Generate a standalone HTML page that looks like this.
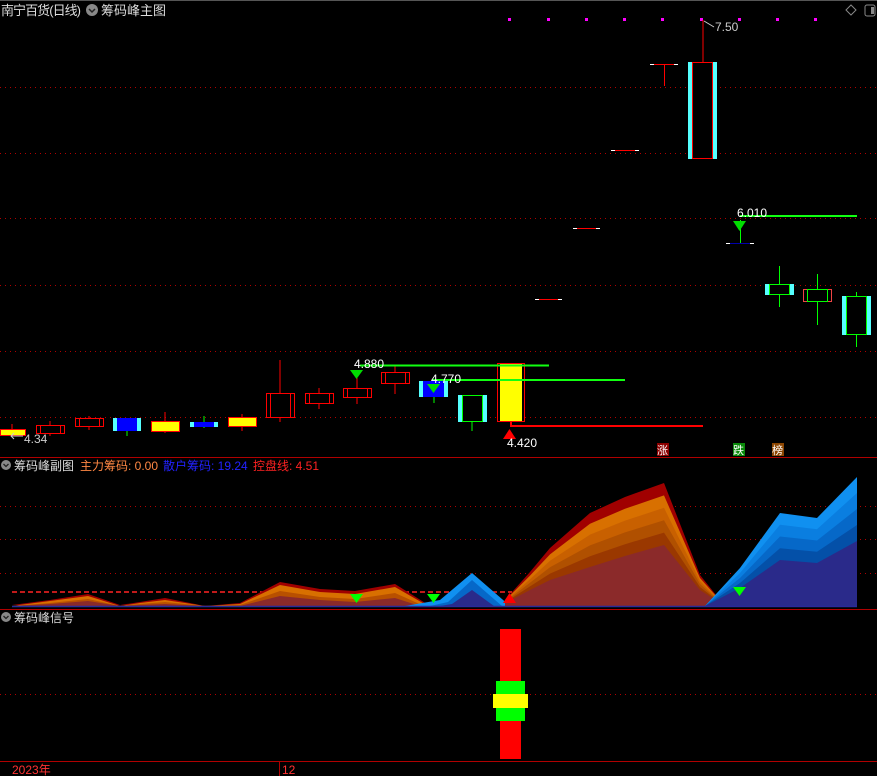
<!DOCTYPE html>
<html><head><meta charset="utf-8"><style>
html,body{margin:0;padding:0;background:#000;width:877px;height:776px;overflow:hidden}
svg{display:block}
text{font-family:"Liberation Sans","Noto Sans CJK SC",sans-serif}
</style></head><body>
<svg width="877" height="776" viewBox="0 0 877 776" xmlns="http://www.w3.org/2000/svg">
<rect width="877" height="776" fill="#000"/>
<line x1="0" y1="0.5" x2="877" y2="0.5" stroke="#555" />
<g stroke="#b00000" stroke-dasharray="1,4">
<line x1="0" y1="87.5" x2="877" y2="87.5"/>
<line x1="0" y1="153.5" x2="877" y2="153.5"/>
<line x1="0" y1="218.5" x2="877" y2="218.5"/>
<line x1="0" y1="285.5" x2="877" y2="285.5"/>
<line x1="0" y1="351.5" x2="877" y2="351.5"/>
<line x1="0" y1="417.5" x2="877" y2="417.5"/>
<line x1="0" y1="506.5" x2="877" y2="506.5"/>
<line x1="0" y1="539.5" x2="877" y2="539.5"/>
<line x1="0" y1="573.5" x2="877" y2="573.5"/>
<line x1="0" y1="694.5" x2="877" y2="694.5"/>
</g>
<line x1="0" y1="457.5" x2="877" y2="457.5" stroke="#b00000"/>
<line x1="0" y1="609.5" x2="877" y2="609.5" stroke="#b00000"/>
<line x1="0" y1="761.5" x2="877" y2="761.5" stroke="#b00000"/>
<line x1="279.5" y1="761" x2="279.5" y2="776" stroke="#b00000"/>

<text x="1" y="15" fill="#ddd" font-size="13" textLength="80">南宁百货(日线)</text>
<circle cx="92" cy="10" r="6" fill="#888"/><path d="M89 9l3 3 3-3" stroke="#222" stroke-width="1.5" fill="none"/>
<text x="101" y="15" fill="#ddd" font-size="13">筹码峰主图</text>
<g fill="#f0f"><rect x="508" y="18" width="3" height="3"/><rect x="547" y="18" width="3" height="3"/><rect x="585" y="18" width="3" height="3"/><rect x="623" y="18" width="3" height="3"/><rect x="661" y="18" width="3" height="3"/><rect x="700" y="18" width="3" height="3"/><rect x="738" y="18" width="3" height="3"/><rect x="776" y="18" width="3" height="3"/><rect x="814" y="18" width="3" height="3"/></g>
<path d="M851 5l5 5-5 5-5-5z" stroke="#888" fill="none"/>
<rect x="865" y="5" width="10" height="11" rx="2" stroke="#888" fill="none"/><rect x="871" y="7" width="3" height="7" fill="#888"/>

<g stroke-width="1">
<line x1="12" y1="424" x2="12" y2="437" stroke="#f00"/><rect x="0.5" y="429.5" width="25" height="6" fill="#ff0" stroke="#f00"/>
<line x1="50" y1="421" x2="50" y2="436" stroke="#f00"/><rect x="36.5" y="425.5" width="28" height="8" fill="#000" stroke="#f00"/><line x1="40.5" y1="426" x2="40.5" y2="433" stroke="#f00"/><line x1="60.5" y1="426" x2="60.5" y2="433" stroke="#f00"/>
<line x1="89" y1="416" x2="89" y2="430" stroke="#f00"/><rect x="75.5" y="418.5" width="28" height="8" fill="#000" stroke="#f00"/><line x1="79.5" y1="419" x2="79.5" y2="426" stroke="#f00"/><line x1="99.5" y1="419" x2="99.5" y2="426" stroke="#f00"/>
<line x1="127" y1="430" x2="127" y2="436" stroke="#0f0"/><rect x="113" y="418" width="28" height="13" fill="#5ff"/><rect x="117" y="418" width="20" height="13" fill="#00f"/>
<line x1="165" y1="412" x2="165" y2="433" stroke="#f00"/><rect x="151.5" y="421.5" width="28" height="10" fill="#ff0" stroke="#f00"/>
<line x1="204" y1="416" x2="204" y2="428" stroke="#0f0"/><rect x="190" y="422" width="28" height="5" fill="#5ff"/><rect x="194" y="422" width="20" height="5" fill="#00f"/>
<line x1="242" y1="414" x2="242" y2="431" stroke="#f00"/><rect x="228.5" y="417.5" width="28" height="9" fill="#ff0" stroke="#f00"/>
<line x1="280" y1="360" x2="280" y2="422" stroke="#f00"/><rect x="266.5" y="393.5" width="28" height="24" fill="#000" stroke="#f00"/><line x1="270.5" y1="394" x2="270.5" y2="417" stroke="#f00"/><line x1="290.5" y1="394" x2="290.5" y2="417" stroke="#f00"/>
<line x1="319" y1="388" x2="319" y2="409" stroke="#f00"/><rect x="305.5" y="393.5" width="28" height="10" fill="#000" stroke="#f00"/><line x1="309.5" y1="394" x2="309.5" y2="403" stroke="#f00"/><line x1="329.5" y1="394" x2="329.5" y2="403" stroke="#f00"/>
<line x1="357" y1="378" x2="357" y2="404" stroke="#f00"/><rect x="343.5" y="388.5" width="28" height="9" fill="#000" stroke="#f00"/><line x1="347.5" y1="389" x2="347.5" y2="397" stroke="#f00"/><line x1="367.5" y1="389" x2="367.5" y2="397" stroke="#f00"/>
<line x1="395" y1="366" x2="395" y2="394" stroke="#f00"/><rect x="381.5" y="372.5" width="28" height="11" fill="#000" stroke="#f00"/><line x1="385.5" y1="373" x2="385.5" y2="383" stroke="#f00"/><line x1="405.5" y1="373" x2="405.5" y2="383" stroke="#f00"/>
<line x1="434" y1="396" x2="434" y2="403" stroke="#0f0"/><rect x="419" y="381" width="29" height="16" fill="#5ff"/><rect x="423" y="381" width="21" height="16" fill="#00f"/>
<line x1="472" y1="420" x2="472" y2="431" stroke="#0f0"/><rect x="458" y="395" width="29" height="27" fill="#5ff"/><rect x="462.5" y="395.5" width="20" height="26" fill="#000" stroke="#0f0"/>
<rect x="497.5" y="363.5" width="27" height="58" fill="#000" stroke="#f00"/><rect x="500" y="364" width="22" height="57" fill="#ff0"/>
<line x1="535" y1="299.5" x2="562" y2="299.5" stroke="#fff"/><line x1="539" y1="299.5" x2="558" y2="299.5" stroke="#f00"/>
<line x1="573" y1="228.5" x2="600" y2="228.5" stroke="#fff"/><line x1="577" y1="228.5" x2="596" y2="228.5" stroke="#f00"/>
<line x1="611" y1="150.5" x2="639" y2="150.5" stroke="#fff"/><line x1="615" y1="150.5" x2="635" y2="150.5" stroke="#f00"/>
<line x1="650" y1="64.5" x2="678" y2="64.5" stroke="#fff"/><line x1="654" y1="64.5" x2="674" y2="64.5" stroke="#f00"/><line x1="664.5" y1="64" x2="664.5" y2="86" stroke="#f00"/>
<line x1="703" y1="20" x2="703" y2="62" stroke="#f00"/><rect x="688" y="62" width="29" height="97" fill="#5ff"/><rect x="692.5" y="62.5" width="20" height="96" fill="#000" stroke="#f00"/>
<line x1="726" y1="243.5" x2="754" y2="243.5" stroke="#fff"/><line x1="730" y1="243.5" x2="750" y2="243.5" stroke="#00a"/><line x1="740.5" y1="220" x2="740.5" y2="243" stroke="#0f0"/>
<line x1="779.5" y1="266" x2="779.5" y2="307" stroke="#0f0"/><rect x="765" y="284" width="29" height="11" fill="#5ff"/><rect x="769.5" y="284.5" width="20" height="10" fill="#000" stroke="#0f0"/>
<line x1="817.5" y1="274" x2="817.5" y2="325" stroke="#0f0"/><rect x="803.5" y="289.5" width="28" height="12" fill="#000" stroke="#e44"/><rect x="807.5" y="289.5" width="20" height="12" fill="none" stroke="#0f0"/>
<line x1="856.5" y1="292" x2="856.5" y2="347" stroke="#0f0"/><rect x="842" y="296" width="29" height="39" fill="#5ff"/><rect x="846.5" y="296.5" width="20" height="38" fill="#000" stroke="#0f0"/>
</g>
<line x1="360" y1="365.5" x2="549" y2="365.5" stroke="#1f1" stroke-width="2"/>
<line x1="432" y1="380" x2="625" y2="380" stroke="#1f1" stroke-width="2"/>
<line x1="740" y1="216" x2="857" y2="216" stroke="#1f1" stroke-width="2"/>
<path d="M511 421v5h192" stroke="#f00" stroke-width="2" fill="none"/>
<path d="M350 370h13l-6.5 9z" fill="#0d0"/>
<path d="M427 384h13l-6.5 9z" fill="#0d0"/>
<path d="M733 221h13l-6.5 10z" fill="#0d0"/>
<path d="M503 439h13l-6.5-10z" fill="#f00"/>
<text x="354" y="368" fill="#fff" font-size="12">4.880</text>
<text x="431" y="383" fill="#fff" font-size="12">4.770</text>
<text x="737" y="217" fill="#fff" font-size="12">6.010</text>
<text x="715" y="31" fill="#ccc" font-size="12">7.50</text><path d="M704 21l10 6" stroke="#ccc"/>
<text x="24" y="443" fill="#ccc" font-size="12">4.34</text><path d="M11 436h12M14 433l-3 3 3 3" stroke="#ccc" fill="none"/>
<text x="507" y="447" fill="#fff" font-size="12">4.420</text>
<rect x="657" y="443" width="12" height="13" fill="#8b0000"/><text x="657" y="454" fill="#fff" font-size="11">涨</text>
<rect x="733" y="443" width="12" height="13" fill="#0a8a0a"/><text x="733" y="454" fill="#fff" font-size="11">跌</text>
<rect x="772" y="443" width="12" height="13" fill="#8b4500"/><text x="772" y="454" fill="#fff" font-size="11">榜</text>

<circle cx="6" cy="465" r="5" fill="#888"/><path d="M3.5 464l2.5 2.5 2.5-2.5" stroke="#222" stroke-width="1.3" fill="none"/>
<text x="14" y="470" fill="#ddd" font-size="12">筹码峰副图</text>
<text x="80" y="470" fill="#f84" font-size="12">主力筹码: 0.00</text>
<text x="163" y="470" fill="#22f" font-size="12">散户筹码: 19.24</text>
<text x="253" y="470" fill="#f22" font-size="12">控盘线: 4.51</text>

<path d="M12 592h500" stroke="#f22" stroke-width="1.5" stroke-dasharray="5,3"/>
<polygon points="12,605 50,600 88,594 120,605 140,602 165,598 205,606 240,603 280,582 320,589 355,591 395,584 430,606" fill="#a00000"/>
<polygon points="12,606 50,601 88,596 120,606 140,603 165,600 205,606 240,604 280,585 320,592 355,594 395,587 428,606" fill="#d87000"/>
<polygon points="12,606 50,603 88,599 120,606 140,604 165,602 205,606 240,605 280,591 320,597 355,599 395,593 424,606" fill="#b85000"/>
<polygon points="12,606 50,604 88,601 120,606 140,605 165,604 205,606 240,606 280,596 320,600 355,602 395,598 420,606" fill="#8b2a2a"/>
<polygon points="405,606 440,600 472,573 510,606" fill="#1090f0"/>
<polygon points="430,606 448,602 472,580 502,606" fill="#0668c8"/>
<polygon points="440,606 452,604 472,590 494,606" fill="#2a2a8a"/>
<polygon points="505,600 530,572 550,548 590,513 625,497 664,483 700,575 720,600 720,606 505,606" fill="#a00000"/>
<polygon points="505,600.6 530,575.6 550,554.4 590,523.8 625,508.8 664,495.4 700,578 720,600.6 720,606 505,606" fill="#d87000"/>
<polygon points="505,601.2 530,579.2 550,560.8 590,534.6 625,520.6 664,507.8 700,581 720,601.2 720,606 505,606" fill="#c86000"/>
<polygon points="505,601.8 530,582.8 550,567.2 590,545.4 625,532.4 664,520.2 700,584 720,601.8 720,606 505,606" fill="#b05000"/>
<polygon points="505,602.4 530,586.4 550,573.6 590,556.2 625,544.2 664,532.6 700,587 720,602.4 720,606 505,606" fill="#9a3800"/>
<polygon points="505,603 530,590 550,580 590,567 625,556 664,545 700,590 720,603 720,606 505,606" fill="#8b2a2a"/>
<polygon points="705,606 740,568 780,513 817,518 857,477 857,606" fill="#1090f0"/>
<polygon points="705,606 740,573 780,524.8 817,529.2 857,493 857,606" fill="#0a7ee0"/>
<polygon points="705,606 740,578 780,536.5 817,540.5 857,509 857,606" fill="#0668c8"/>
<polygon points="705,606 740,583 780,548.3 817,551.8 857,525 857,606" fill="#0450a8"/>
<polygon points="705,606 740,588 780,560 817,563 857,541 857,606" fill="#2a2a8a"/>
<line x1="12" y1="606.5" x2="857" y2="606.5" stroke="#2a2a9a" stroke-width="1.5"/>
<path d="M350 594h13l-6.5 9z" fill="#0f0"/>
<path d="M427 594h13l-6.5 9z" fill="#0f0"/>
<path d="M733 587h13l-6.5 9z" fill="#0f0"/>
<path d="M503 603h13l-6.5-10z" fill="#f00"/>

<circle cx="6" cy="617" r="5" fill="#888"/><path d="M3.5 616l2.5 2.5 2.5-2.5" stroke="#222" stroke-width="1.3" fill="none"/>
<text x="14" y="622" fill="#ddd" font-size="12">筹码峰信号</text>
<rect x="500" y="629" width="21" height="130" fill="#f00"/>
<rect x="496" y="681" width="29" height="40" fill="#0f0"/>
<rect x="493" y="694" width="35" height="14" fill="#ff0"/>

<text x="12" y="774" fill="#f33" font-size="12">2023年</text>
<text x="282" y="774" fill="#f33" font-size="12">12</text>
</svg>
</body></html>
